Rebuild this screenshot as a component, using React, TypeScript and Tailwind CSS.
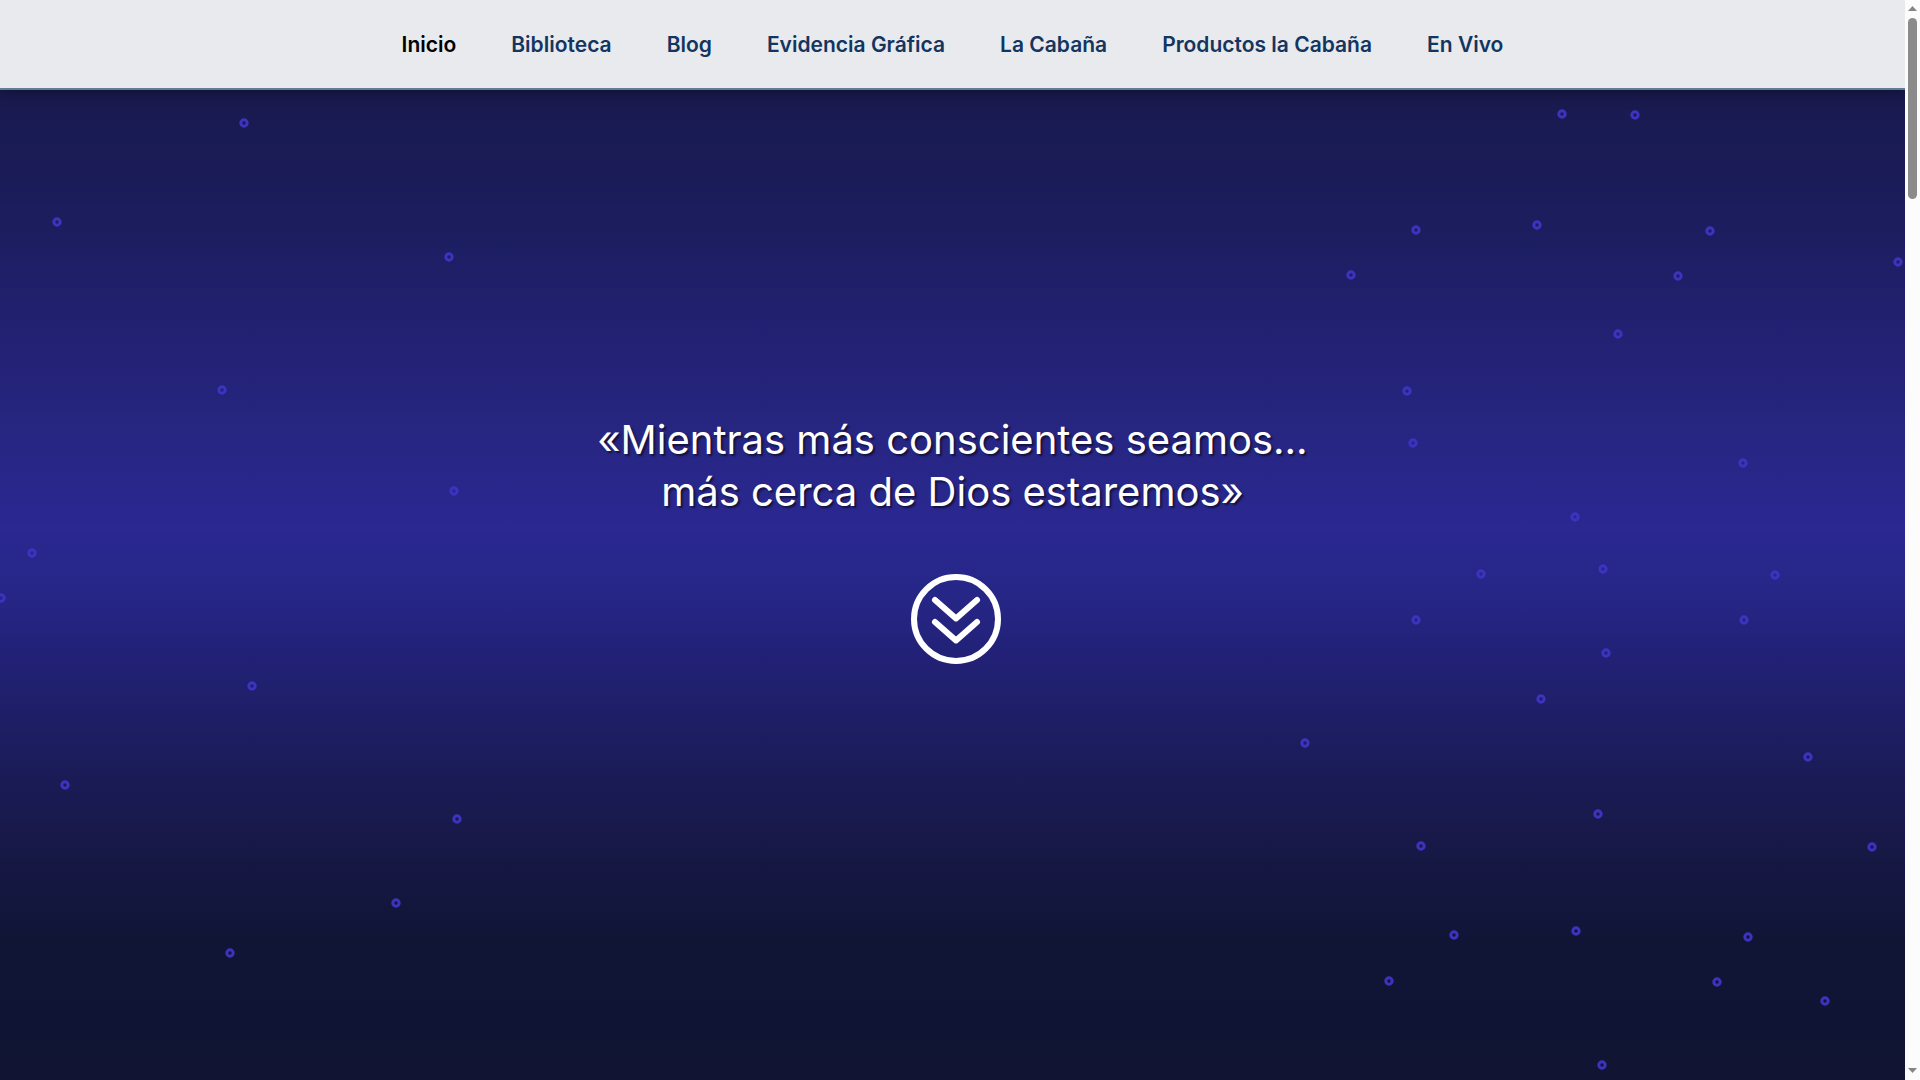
const links = [
  { name: "Inicio", href: "#inicio", active: true },
  { name: "Biblioteca", href: "#biblioteca", active: false },
  { name: "Blog", href: "#blog", active: false },
  { name: "Evidencia Gráfica", href: "#evidencia-grafica", active: false },
  { name: "La Cabaña", href: "#la-cabana", active: false },
  { name: "Productos la Cabaña", href: "#productos", active: false },
  { name: "En Vivo", href: "#en-vivo", active: false },
];

// x, y of every ring in the background
const dots = [
  [244, 33], [57, 132], [449, 167], [222, 300], [454, 401], [32, 463], [1, 508],
  [252, 596], [65, 695], [457, 729], [396, 813], [230, 863],
  [1562, 24], [1635, 25], [1416, 140], [1537, 135], [1710, 141], [1898, 172],
  [1351, 185], [1678, 186], [1618, 244], [1407, 301], [1413, 353], [1743, 373],
  [1575, 427], [1481, 484], [1603, 479], [1775, 485], [1416, 530], [1744, 530],
  [1606, 563], [1541, 609], [1305, 653], [1808, 667], [1598, 724], [1421, 756],
  [1872, 757], [1454, 845], [1576, 841], [1748, 847], [1389, 891], [1717, 892],
  [1825, 911], [1602, 975],
];

function Navbar() {
  return (
    <header className="relative z-10 flex h-[90px] shrink-0 items-center justify-center border-b-2 border-[#5f7d96] bg-[#e8eaed] shadow-[0_2px_14px_rgba(0,0,0,0.4)]">
      <nav>
        <ul className="flex items-center gap-[55px] pt-0.5">
          {links.map((link) => (
            <li key={link.name}>
              <a
                href={link.href}
                className={
                  link.active
                    ? "whitespace-nowrap text-[21px] font-semibold text-black"
                    : "whitespace-nowrap text-[21px] font-semibold text-[#133560]"
                }
              >
                {link.name}
              </a>
            </li>
          ))}
        </ul>
      </nav>
    </header>
  );
}

function Hero() {
  return (
    <section className="relative flex flex-1 flex-col items-center bg-[linear-gradient(to_bottom,#191a4e_0%,#1b1d5d_13%,#222173_25%,#26257f_33%,#2a2891_44%,#262687_51%,#222177_57%,#1b1c5a_68%,#181949_75%,#101536_86%,#111433_100%)] pt-[324px]">
      {/* Background rings */}
      <svg
        className="absolute inset-0 h-full w-full"
        viewBox="0 0 1905 990"
        preserveAspectRatio="xMidYMin slice"
        aria-hidden="true"
      >
        {dots.map(([x, y]) => (
          <circle key={`${x}-${y}`} cx={x} cy={y} r="3.2" fill="none" stroke="#3c33be" strokeWidth="3" />
        ))}
      </svg>

      {/* Quote */}
      <h1 className="relative text-center text-[40px] leading-[52px] text-white [text-shadow:2px_2px_2px_rgba(0,0,0,0.55)]">
        «Mientras más conscientes seamos…
        <br />
        más cerca de Dios estaremos»
      </h1>

      {/* Scroll down */}
      <a href="#contenido" aria-label="Bajar" className="relative mt-14 ml-1.5">
        <svg width="90" height="90" viewBox="0 0 90 90" fill="none" stroke="#fff" strokeWidth="6">
          <circle cx="45" cy="45" r="42" />
          <path d="M24 26 L45 44.5 L66 26" strokeLinecap="round" strokeLinejoin="round" />
          <path d="M24 48 L45 66.5 L66 48" strokeLinecap="round" strokeLinejoin="round" />
        </svg>
      </a>
    </section>
  );
}

function ScrollRail() {
  return (
    <div className="flex w-[15px] shrink-0 flex-col items-center bg-[#fcfcfc]">
      <svg className="mt-[6px]" width="9" height="5" viewBox="0 0 9 5" fill="#858585">
        <path d="M0 5 L4.5 0 L9 5 Z" />
      </svg>
      <div className="mt-[7px] h-[181px] w-[9px] rounded-full bg-[#8b8b8b]" />
      <svg className="mt-auto mb-[7px]" width="9" height="5" viewBox="0 0 9 5" fill="#858585">
        <path d="M0 0 L4.5 5 L9 0 Z" />
      </svg>
    </div>
  );
}

export default function App() {
  return (
    <div className="flex min-h-screen font-['Inter',sans-serif]">
      <main className="flex min-w-0 flex-1 flex-col overflow-hidden">
        <Navbar />
        <Hero />
      </main>
      <ScrollRail />
    </div>
  );
}
